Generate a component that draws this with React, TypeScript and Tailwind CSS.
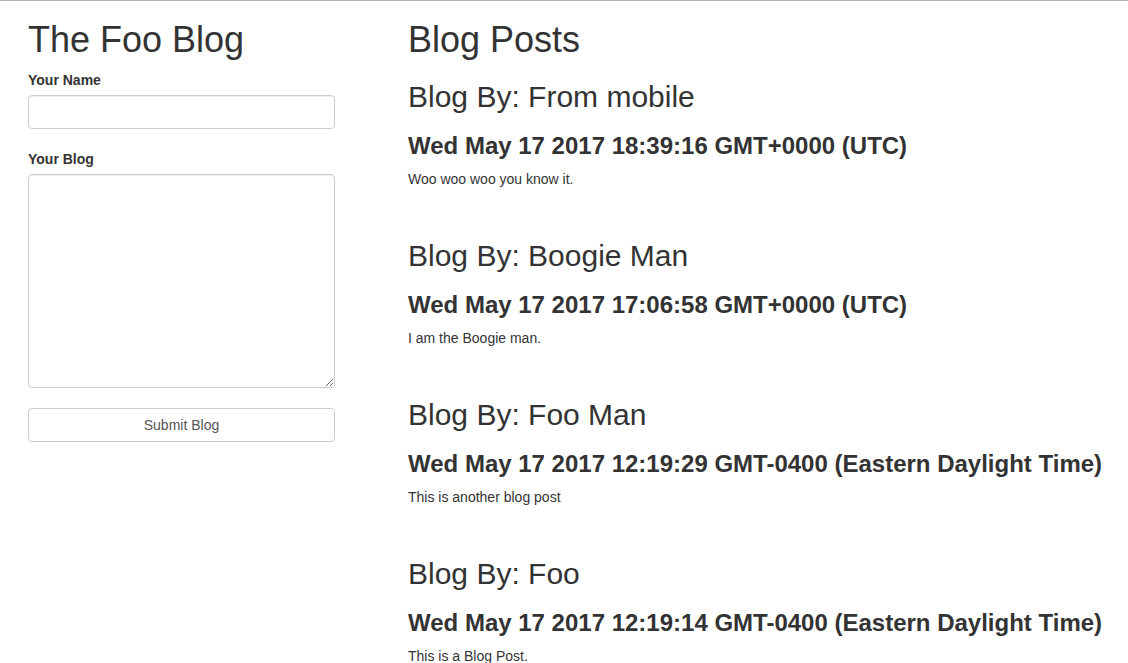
const posts = [
  {
    author: "From mobile",
    date: "Wed May 17 2017 18:39:16 GMT+0000 (UTC)",
    body: "Woo woo woo you know it.",
  },
  {
    author: "Boogie Man",
    date: "Wed May 17 2017 17:06:58 GMT+0000 (UTC)",
    body: "I am the Boogie man.",
  },
  {
    author: "Foo Man",
    date: "Wed May 17 2017 12:19:29 GMT-0400 (Eastern Daylight Time)",
    body: "This is another blog post",
  },
  {
    author: "Foo",
    date: "Wed May 17 2017 12:19:14 GMT-0400 (Eastern Daylight Time)",
    body: "This is a Blog Post.",
  },
];

function BlogForm() {
  return (
    <form className="flex flex-col w-[307px] shrink-0">
      <h1 className="mt-[19px] text-[36px] leading-[1.1] h-[39.6px] whitespace-nowrap">
        The Foo Blog
      </h1>

      <label htmlFor="name" className="mt-[10px] text-[14px] leading-[20px] font-bold">
        Your Name
      </label>
      <input
        id="name"
        type="text"
        className="mt-[5px] h-[34px] w-full border border-[#ccc] rounded-[4px] px-3 shadow-[inset_0_1px_1px_rgba(0,0,0,0.075)] focus:outline-none"
      />

      <label htmlFor="blog" className="mt-[20.5px] text-[14px] leading-[20px] font-bold">
        Your Blog
      </label>
      <textarea
        id="blog"
        rows={10}
        className="mt-[5px] h-[214px] w-full border border-[#ccc] rounded-[4px] px-3 py-[6px] shadow-[inset_0_1px_1px_rgba(0,0,0,0.075)] focus:outline-none"
      />

      <button
        type="submit"
        className="mt-[20px] h-[34px] w-full bg-white border border-[#ccc] rounded-[4px] text-[14px] text-[#555]"
      >
        Submit Blog
      </button>
    </form>
  );
}

function Post({ author, date, body, first }: { author: string; date: string; body: string; first: boolean }) {
  return (
    <div className={first ? "mt-[20px]" : "mt-[49.6px]"}>
      <h2 className="text-[30px] leading-[1.1] h-[33px] whitespace-nowrap">Blog By: {author}</h2>
      <h3 className="mt-[20px] text-[24px] leading-[1.1] h-[26.4px] font-bold whitespace-nowrap">{date}</h3>
      <p className="mt-[10px] text-[14px] leading-[20px]">{body}</p>
    </div>
  );
}

export default function App() {
  return (
    <div
      className="min-h-screen bg-white text-[#333] border-t border-[#b4b4b4] text-[14px]"
      style={{ fontFamily: '"Liberation Sans", Arial, Helvetica, sans-serif' }}
    >
      <div className="flex pl-[28px] gap-[73px]">
        <BlogForm />
        <div className="flex flex-col flex-1">
          <h1 className="mt-[19px] text-[36px] leading-[1.1] h-[39.6px]">Blog Posts</h1>
          {posts.map((p, i) => (
            <Post key={i} first={i === 0} {...p} />
          ))}
        </div>
      </div>
    </div>
  );
}
